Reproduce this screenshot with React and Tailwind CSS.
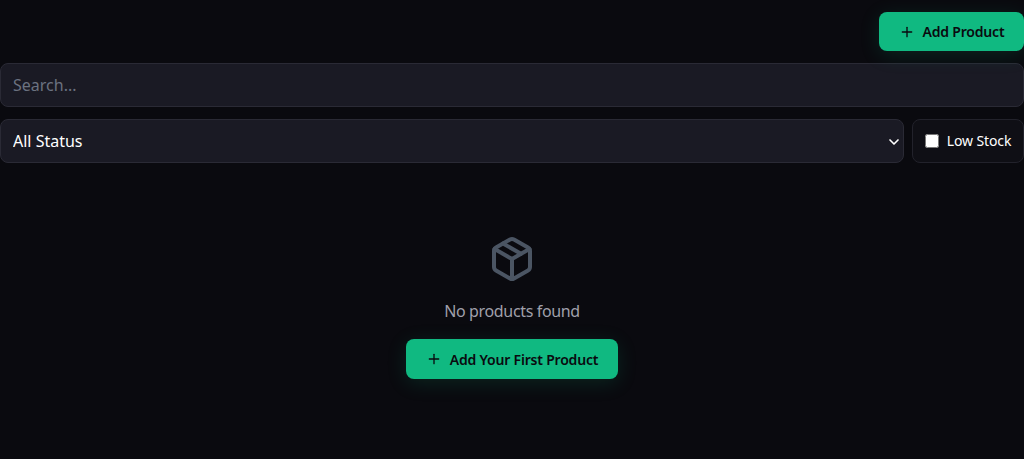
import { ChevronDown, Plus, Package } from 'lucide-react';

const FONT = 'font-["Noto_Sans",sans-serif]';

const App = () => {
  return (
    <div className={`min-h-screen bg-[#0a0a0f] text-white ${FONT}`}>
      <div className="flex justify-end pt-3 mb-3">
        <button className="h-[39px] w-[145px] flex items-center justify-center gap-2 rounded-lg bg-[#10b981] text-[#0a0a0f] text-sm font-semibold tracking-[-0.2px] shadow-[0_4px_20px_rgba(16,185,129,0.15)]">
          <Plus className="w-4 h-4" />
          Add Product
        </button>
      </div>

      <input
        type="text"
        placeholder="Search..."
        className="block w-full h-11 px-3 rounded-lg bg-[#1a1a24] border border-[#2a2a35] text-base text-white placeholder:text-[#6b7280] outline-none"
      />

      <div className="flex gap-2 mt-3">
        <div className="relative flex-1">
          <select className="appearance-none block w-full h-11 px-3 rounded-lg bg-[#1a1a24] border border-[#2a2a35] text-base text-white outline-none">
            <option>All Status</option>
          </select>
          <ChevronDown className="absolute right-[2px] top-[15px] w-4 h-4 stroke-[2.5] pointer-events-none" />
        </div>
        <label className="w-28 h-11 flex items-center justify-center gap-2 rounded-lg bg-[#0f0f15] border border-[#22222b] text-sm tracking-[-0.1px]">
          <input type="checkbox" className="w-3.5 h-3.5" />
          Low Stock
        </label>
      </div>

      <div className="flex flex-col items-center pt-[72px]">
        <Package className="w-12 h-12 text-[#4b5563] mb-4" />
        <p className="text-base text-[#a0a0ab] tracking-[-0.35px] mb-4">No products found</p>
        <button className="h-10 w-[212px] flex items-center justify-center gap-2 rounded-lg bg-[#10b981] text-[#0a0a0f] text-sm font-semibold tracking-[-0.2px] shadow-[0_4px_20px_rgba(16,185,129,0.15)]">
          <Plus className="w-4 h-4" />
          <span className="pt-0.5">Add Your First Product</span>
        </button>
      </div>
    </div>
  );
};

export default App;
